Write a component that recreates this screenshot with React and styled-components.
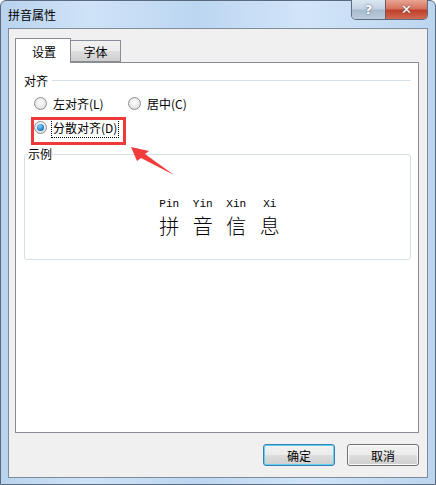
import styled, { createGlobalStyle } from "styled-components"

const GlobalStyle = createGlobalStyle`
    html, body {
        margin: 0;
        padding: 0;
        background: #ffffff;
    }
    body {
        font-family: "Noto Sans CJK SC", "Liberation Sans", sans-serif;
        font-size: 12px;
        color: #000;
    }
`;

const Window = styled.div`
    width: 436px;
    height: 485px;
    box-sizing: border-box;
    display: flex;
    flex-direction: column;
    background: linear-gradient(90deg, #b9d3ee 0%, #cfe3f7 20%, #bcd6f1 45%, #d2e5f8 70%, #bcd5ef 100%);
    border: 1px solid #5a6b80;
    border-radius: 6px 6px 0 0;
`;

const TitleBar = styled.div`
    height: 27px;
    display: flex;
    align-items: flex-start;
    justify-content: space-between;
    padding-left: 7px;
`;

const Title = styled.span`
    margin-top: 5px;
    font-size: 12px;
    color: #000;
`;

const Caption = styled.div`
    display: flex;
    margin-top: -1px;
    margin-right: 7px;
    border: 1px solid #5d6c80;
    border-top: none;
    border-radius: 0 0 5px 5px;
    overflow: hidden;
    height: 19px;
`;

const CapButton = styled.div`
    width: ${p => p.$w}px;
    display: flex;
    align-items: center;
    justify-content: center;
    font-family: "DejaVu Sans", sans-serif;
    font-weight: bold;
    font-size: 13px;
    color: #fff;
    text-shadow: 0 0 2px #39475a;
    background: ${p => p.$close
        ? "linear-gradient(#e8a493 0%, #d6735f 45%, #c0402a 55%, #d06a52 100%)"
        : "linear-gradient(#dbe6f2 0%, #c4d3e3 45%, #a9bbd0 55%, #bccbdc 100%)"};
    border-left: ${p => p.$close ? "1px solid #6d5a5a" : "none"};
`;

const Client = styled.div`
    margin: 0 7px;
    flex: 1;
    margin-bottom: 6px;
    background: #f0f0f0;
    border: 1px solid #7f8b99;
    padding: 9px 8px 0 6px;
    display: flex;
    flex-direction: column;
`;

const Tabs = styled.div`
    display: flex;
    align-items: flex-end;
    height: 24px;
    position: relative;
    z-index: 1;
`;

const Tab = styled.div`
    box-sizing: border-box;
    width: ${p => p.$w}px;
    height: ${p => p.$active ? 25 : 22}px;
    display: flex;
    align-items: center;
    justify-content: center;
    padding-left: ${p => p.$active ? 2 : 0}px;
    border: 1px solid #898c95;
    border-bottom: ${p => p.$active ? "none" : "1px solid #898c95"};
    border-left: ${p => p.$first ? "1px solid #898c95" : "none"};
    background: ${p => p.$active ? "#ffffff" : "linear-gradient(#f2f2f2 0%, #ebebeb 50%, #dddddd 51%, #cfcfcf 100%)"};
    font-size: 12px;
    margin-bottom: ${p => p.$active ? -1 : 0}px;
`;

const Panel = styled.div`
    position: relative;
    box-sizing: border-box;
    height: 371px;
    background: #ffffff;
    border: 1px solid #898c95;
    padding: 9px 7px 0 8px;
`;

const SectionHead = styled.div`
    display: flex;
    align-items: center;
    gap: 4px;
    height: 16px;

    &::after {
        content: "";
        flex: 1;
        height: 1px;
        background: #d5dfe5;
    }
`;

const RadioRow = styled.div`
    display: flex;
    align-items: center;
    height: 24px;
    padding-left: 10px;
`;

const RadioItem = styled.label`
    display: flex;
    align-items: center;
    gap: 4px;
    width: ${p => p.$w ? `${p.$w}px` : "auto"};
`;

const Dot = styled.span`
    box-sizing: border-box;
    width: 13px;
    height: 13px;
    border-radius: 50%;
    border: 1px solid #8e8f8f;
    background: radial-gradient(circle at 50% 40%, #ffffff 0%, #e9e9e9 55%, #cfcfcf 100%);
    display: flex;
    align-items: center;
    justify-content: center;

    &::after {
        content: "";
        display: ${p => p.$on ? "block" : "none"};
        width: 7px;
        height: 7px;
        border-radius: 50%;
        background: radial-gradient(circle at 40% 35%, #8fd3ff 0%, #2f8dd5 50%, #0b4a8c 100%);
    }
`;

const Label = styled.span`
    padding: 1px 1px;
    border: 1px dotted ${p => p.$focus ? "#000" : "transparent"};
    line-height: 17px;
`;

const Highlight = styled.div`
    position: absolute;
    left: 15px;
    top: 54px;
    width: 95px;
    height: 28px;
    box-sizing: border-box;
    border: 3px solid #ee3a3a;
    pointer-events: none;
`;

const Arrow = styled.svg`
    position: absolute;
    left: 110px;
    top: 80px;
    pointer-events: none;
`;

const Group = styled.fieldset`
    margin: 9px 0 0 0;
    height: 112px;
    box-sizing: border-box;
    border: 1px solid #d5dfe5;
    border-radius: 3px;
    padding: 0;
    display: flex;
    flex-direction: column;
    align-items: center;

    legend {
        margin-left: 3px;
        padding: 0;
        font-size: 12px;
        line-height: 12px;
    }
`;

const Sample = styled.div`
    margin-top: 38px;
    margin-left: 4px;
    display: grid;
    grid-template-columns: repeat(4, 33.5px);
    grid-template-rows: 12px 29px;
    row-gap: 1px;
    justify-items: center;
`;

const Pinyin = styled.span`
    font-family: "Liberation Mono", monospace;
    font-size: 11px;
    line-height: 12px;
    height: 12px;
`;

const Hanzi = styled.span`
    font-size: 20px;
    line-height: 29px;
    height: 29px;
    font-weight: 300;
`;

const Footer = styled.div`
    display: flex;
    justify-content: flex-end;
    gap: 12px;
    padding-top: 11px;
`;

const Button = styled.div`
    box-sizing: border-box;
    width: 72px;
    height: 22px;
    display: flex;
    align-items: center;
    justify-content: center;
    border-radius: 3px;
    border: 1px solid ${p => p.$default ? "#3c7fb1" : "#707070"};
    box-shadow: ${p => p.$default ? "inset 0 0 0 1px #5ed0f5" : "inset 0 0 0 1px #fbfbfb"};
    background: linear-gradient(#f2f2f2 0%, #ebebeb 50%, #dddddd 51%, #cfcfcf 100%);
    font-size: 12px;
`;

const samples = [
    ["Pin", "拼"],
    ["Yin", "音"],
    ["Xin", "信"],
    ["Xi", "息"],
];

const App = () => {
    return (
        <>
            <GlobalStyle />
            <Window>
                <TitleBar>
                    <Title>拼音属性</Title>
                    <Caption>
                        <CapButton $w={33}>?</CapButton>
                        <CapButton $w={41} $close>✕</CapButton>
                    </Caption>
                </TitleBar>
                <Client>
                    <Tabs>
                        <Tab $w={56} $active $first>设置</Tab>
                        <Tab $w={50}>字体</Tab>
                    </Tabs>
                    <Panel>
                        <SectionHead>对齐</SectionHead>
                        <RadioRow style={{ marginTop: 3 }}>
                            <RadioItem $w={94}>
                                <Dot />
                                <Label>左对齐(L)</Label>
                            </RadioItem>
                            <RadioItem>
                                <Dot />
                                <Label>居中(C)</Label>
                            </RadioItem>
                        </RadioRow>
                        <RadioRow>
                            <RadioItem>
                                <Dot $on />
                                <Label $focus>分散对齐(D)</Label>
                            </RadioItem>
                        </RadioRow>
                        <Group>
                            <legend>示例</legend>
                            <Sample>
                                {samples.map(([py]) => <Pinyin key={py}>{py}</Pinyin>)}
                                {samples.map(([py, hz]) => <Hanzi key={hz}>{hz}</Hanzi>)}
                            </Sample>
                        </Group>
                        <Highlight />
                        <Arrow width="70" height="40" viewBox="0 0 70 40">
                            <polygon points="5,4 11,18 15,15 48,32 19,11 23,8" fill="#f23c3c" />
                        </Arrow>
                    </Panel>
                    <Footer>
                        <Button $default>确定</Button>
                        <Button>取消</Button>
                    </Footer>
                </Client>
            </Window>
        </>
    )
}

export default App;
